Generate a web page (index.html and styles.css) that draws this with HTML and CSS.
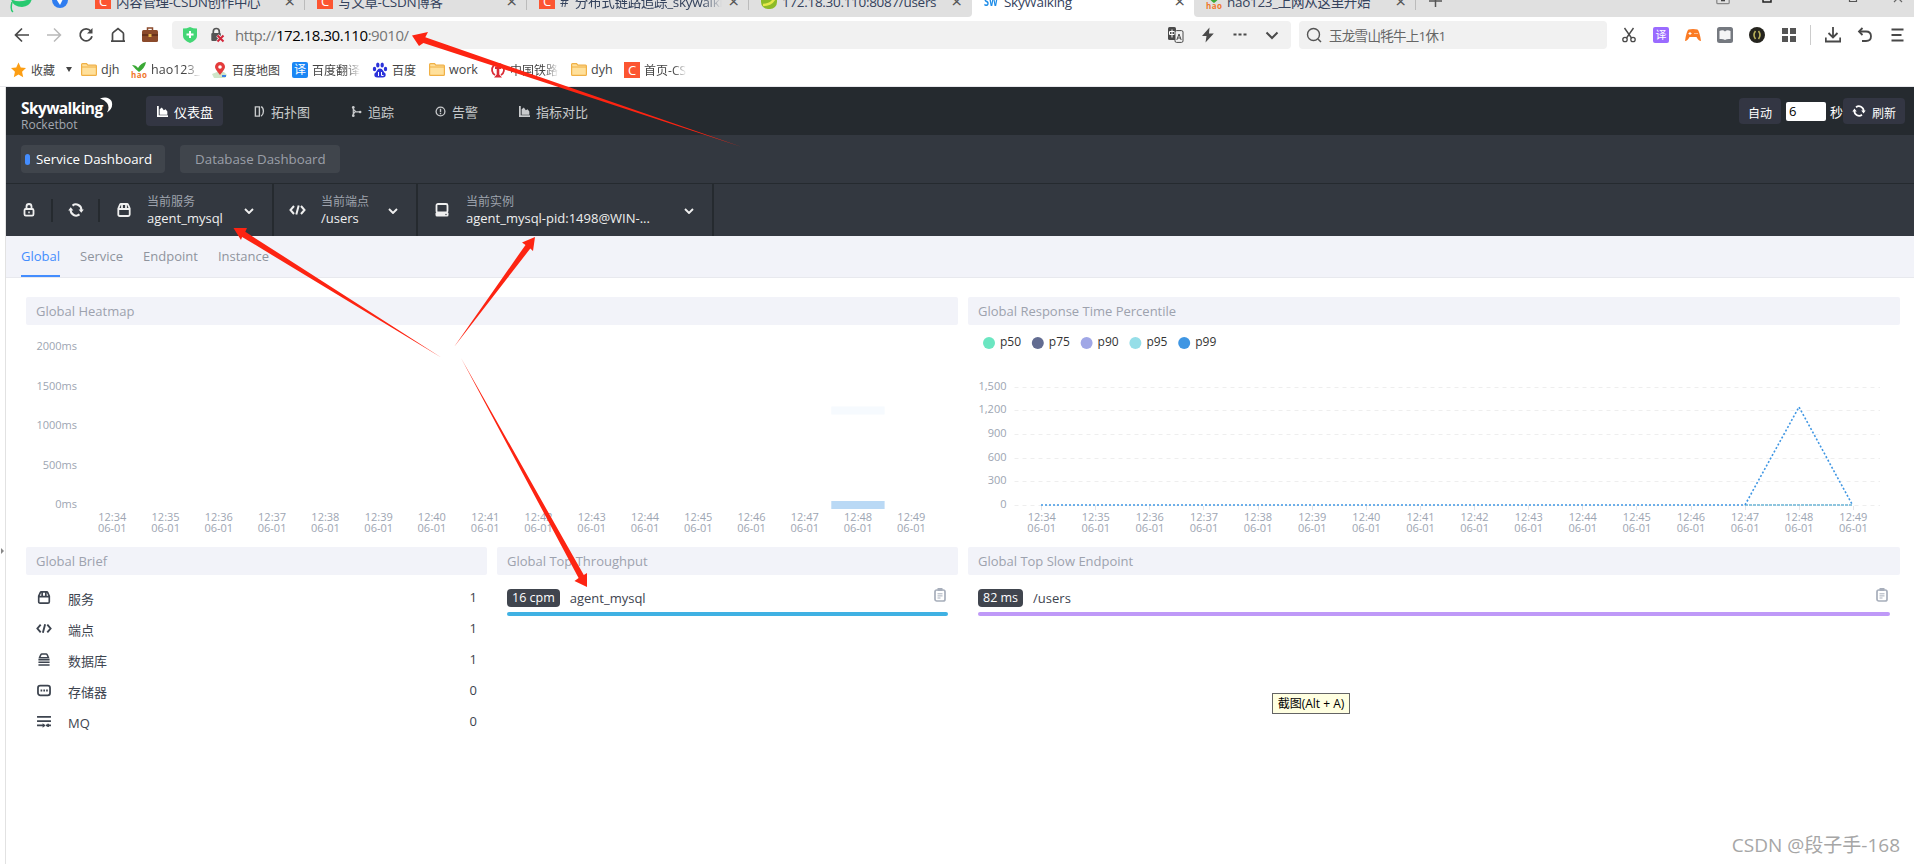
FILE: index.html
```html
<!DOCTYPE html>
<html lang="zh-CN">
<head>
<meta charset="UTF-8">
<meta name="viewport" content="width=device-width, initial-scale=1.0">
<title>SkyWalking</title>
<link rel="stylesheet" href="styles.css">
</head>
<body>

<svg class="sprite">
    <symbol id="i-chart" viewBox="0 0 10 10"><path d="M.8 0v9.2H10" fill="none" stroke="currentColor" stroke-width="1.6"/><path d="M2.4 8V3l2-1.6 1.8 2.4 1.6-.8L9.4 5v3z" fill="currentColor"/></symbol>
    <symbol id="i-topo" viewBox="0 0 11 12"><path d="M1 1h4.4v10H1zM5.4 1M7.3.8C10.600 2.500 10.600 9 7.300 11" fill="none" stroke="currentColor" stroke-width="1.5"/></symbol>
    <symbol id="i-trace" viewBox="0 0 11 12"><path d="M2 1v10M2 3.500l3 3h5M2 8.500l2-2" fill="none" stroke="currentColor" stroke-width="1.300"/><circle cx="2" cy="1.500" r="1.500" fill="currentColor"/><circle cx="2" cy="10.500" r="1.500" fill="currentColor"/><circle cx="9.500" cy="6.500" r="1.400" fill="currentColor"/></symbol>
    <symbol id="i-alarm" viewBox="0 0 12 12"><circle cx="6" cy="6" r="4.800" fill="none" stroke="currentColor" stroke-width="1.400"/><path d="M6 3v3.800M6 7.700v1.300" stroke="currentColor" stroke-width="1.500"/></symbol>
    <symbol id="i-reload" viewBox="0 0 16 14"><path d="M4.500 2.600A5.500 5.500 0 0 1 13.400 7M11.500 11.400A5.500 5.500 0 0 1 2.600 7" fill="none" stroke="currentColor" stroke-width="2"/><path d="M10.600 6.500h5.200l-2.500 3.300zM.2 7.500h5.200L2.700 4.200z" fill="currentColor"/></symbol>
    <symbol id="i-lock" viewBox="0 0 12 14"><path d="M3.500 6V3.500a2.500 2.500 0 0 1 5 0V6" fill="none" stroke="currentColor" stroke-width="1.800"/><rect x="1.500" y="6" width="9" height="6.600" rx="1.300" fill="none" stroke="currentColor" stroke-width="1.800"/><path d="M6 8.500v1.800" stroke="currentColor" stroke-width="1.500"/></symbol>
    <symbol id="i-service" viewBox="0 0 14 14"><path d="M1.300 5.500L3 1.700Q3.300 1 4 1h6q.7 0 1 .7l1.700 3.800v6q0 1.500-1.500 1.500H2.800q-1.500 0-1.500-1.500zM1.500 6h11M5 1v4.500M9 1v4.500" fill="none" stroke="currentColor" stroke-width="1.800"/></symbol>
    <symbol id="i-code" viewBox="0 0 17 12"><path d="M5 2L1.500 6 5 10M12 2l3.500 4L12 10M9.700 1.500L7.300 10.500" fill="none" stroke="currentColor" stroke-width="2"/></symbol>
    <symbol id="i-host" viewBox="0 0 14 14"><rect x="1.500" y="1" width="11" height="8.500" rx="1.500" fill="none" stroke="currentColor" stroke-width="1.800"/><rect x=".5" y="9" width="13" height="4.500" rx="1.500" fill="currentColor"/><circle cx="11" cy="11.500" r=".7" fill="#333840"/></symbol>
    <symbol id="i-down" viewBox="0 0 10 6"><path d="M1 1l4 4 4-4" fill="none" stroke="currentColor" stroke-width="1.900"/></symbol>
    <symbol id="i-db" viewBox="0 0 14 14"><path d="M2.200 5L3.500 2Q4 1.200 4.700 1.200h4.600q.7 0 1.200.8L11.800 5z" fill="none" stroke="currentColor" stroke-width="1.600"/><path d="M1 7.300h12M1 10h12M1 12.900h12" stroke="currentColor" stroke-width="1.800"/></symbol>
    <symbol id="i-cache" viewBox="0 0 15 14"><rect x="1" y="1.800" width="13" height="10.400" rx="2.500" fill="none" stroke="currentColor" stroke-width="1.900"/><path d="M3.800 7h7.800" stroke="currentColor" stroke-width="1.900" stroke-dasharray="1.800 1.200"/></symbol>
    <symbol id="i-mq" viewBox="0 0 15 14"><path d="M0 2h15M0 6.600h15M0 11.200h8M9.500 11.200H15" stroke="currentColor" stroke-width="1.800"/><path d="M6 8.800l3.200 2.400L6 13.600zM11 9.500h1.800v3.500H11z" fill="currentColor"/></symbol>
    <symbol id="i-clip" viewBox="0 0 12 14"><rect x="1" y="2" width="10" height="11" rx="1.800" fill="none" stroke="currentColor" stroke-width="1.700"/><path d="M3.500 0h5v3h-5z" fill="currentColor"/><path d="M3.500 5.800h5M3.500 7.900h5M3.500 10h3" stroke="currentColor" stroke-width="1"/></symbol>
    <symbol id="i-folder" viewBox="0 0 16 13"><path d="M.6 1.500q0-.9.900-.9h4l1.400 1.600h7.600q.9 0 .9.900v8.400q0 .9-.9.900h-13q-.9 0-.9-.9z" fill="#ffe09b" stroke="#f0b045" stroke-width="1.200"/><path d="M1 4h14" stroke="#f0b045"/></symbol>
    <symbol id="i-hao" viewBox="0 0 16 16"><path d="M1 3q4 0 6 3 3-5 8-6-1 6-7 10Q5 8 1 3z" fill="#3aa935"/><text x="0" y="15.500" font-size="8" font-weight="700" fill="#f0762b" textLength="16">hao</text></symbol>
</svg>

<!-- browser window -->
<div class="tabstrip">
    <div class="tabs-left">
        <svg class="logo-e" viewBox="0 0 24 16"><path d="M1 1q8 5 21-1Q21 8 12 9 3 9 1 1z" fill="#27c96f"/><path d="M2 4Q0 12 3 14" fill="none" stroke="#27c96f" stroke-width="1.500"/></svg>
        <svg class="logo-send" viewBox="0 0 16 16"><circle cx="8" cy="8" r="8" fill="#2f7df0"/><path d="M3.500 6L12 5 8 13z" fill="#fff"/></svg>
        <div class="tab"><i class="ico-c">C</i><span>内容管理-CSDN创作中心</span><b>×</b></div>
        <div class="tab"><i class="ico-c">C</i><span>写文章-CSDN博客</span><b>×</b></div>
        <div class="tab"><i class="ico-c">C</i><span class="fade">#&nbsp; 分布式链路追踪_skywalking</span><b>×</b></div>
        <div class="tab last"><svg class="ico" viewBox="0 0 16 16"><rect y="-4" width="16" height="20" rx="7" fill="#8dbb27"/><path d="M2 12Q12 12 15 2" fill="none" stroke="#e6e84a" stroke-width="2.500"/></svg><span>172.18.30.110:8087/users</span><b>×</b></div>
    </div>
    <div class="tab active"><i class="ico-sw">SW</i><span>SkyWalking</span><b>×</b></div>
    <div class="tabs-right">
        <div class="tab"><svg class="ico"><use href="#i-hao"/></svg><span>hao123_上网从这里开始</span><b>×</b></div>
        <svg class="plus" viewBox="0 0 13 16"><path d="M0 9h13M6.500 3v12" stroke="#555" stroke-width="1.500"/></svg>
        <svg class="winctl" viewBox="0 0 200 6"><path d="M.8 0v2.500q0 1.200 1.200 1.200h10q1.200 0 1.200-1.200V0" fill="none" stroke="#888" stroke-width="1.300"/><path d="M5 0h4v1.300H5z" fill="#444"/><path d="M47 0v2h8V0" fill="none" stroke="#222" stroke-width="1.500"/><path d="M133.500 0v1.500h7V0" fill="none" stroke="#555" stroke-width="1.200"/><path d="M178 2l3-3M186 2l-3-3" stroke="#666" stroke-width="1.200"/></svg>
    </div>
</div>

<div class="toolbar">
    <div class="nav-icons">
        <svg viewBox="0 0 16 16"><path d="M15 8H2M8 1.500L1.500 8 8 14.500" fill="none" stroke="#484848" stroke-width="1.700"/></svg>
        <svg viewBox="0 0 16 16"><path d="M1 8h13M8 1.500L14.500 8 8 14.500" fill="none" stroke="#b9b9b9" stroke-width="1.500"/></svg>
        <svg viewBox="0 0 16 16"><path d="M14 9.200A6 6 0 1 1 12.800 4" fill="none" stroke="#484848" stroke-width="1.800"/><path d="M14.500 1v5.500H9z" fill="#484848"/></svg>
        <svg viewBox="0 0 16 16"><path d="M1 14.200h14M2.500 14V7q0-1 .8-1.600L8 1.500l4.700 3.900q.8.600.8 1.600v7" fill="none" stroke="#484848" stroke-width="1.700"/></svg>
        <svg viewBox="0 0 16 16"><path d="M5.500 3V1h5v2" fill="none" stroke="#8b4a2b" stroke-width="1.500"/><rect y="3" width="16" height="12" rx="1.500" fill="#8b4a2b"/><path d="M0 8h16" stroke="#5d2d18" stroke-width="1.500"/><rect x="6.500" y="7" width="3" height="3" fill="#e8b64c"/></svg>
    </div>
    <div class="address">
        <svg class="shield" viewBox="0 0 14 16"><path d="M0 1.500Q4 1.500 7 0q3 1.500 7 1.500V9q0 4-7 7-7-3-7-7z" fill="#43d675"/><path d="M7 4v7M3.500 7.500h7" stroke="#fff" stroke-width="2"/></svg>
        <svg class="unsafe" viewBox="0 0 16 16"><path d="M3.300 7V4.500a3 3 0 0 1 6 0V7" fill="none" stroke="#555" stroke-width="1.700"/><rect x="1.300" y="6" width="9.500" height="8" rx="1" fill="#555"/><path d="M7.500 8.500l6 6M13.500 8.500l-6 6" stroke="#f1f1f1" stroke-width="3.500"/><path d="M7.500 8.500l6 6M13.500 8.500l-6 6" stroke="#d3263a" stroke-width="2"/></svg>
        <span class="url">http://<em>172.18.30.110</em>:9010/</span>
        <div class="addr-icons">
            <svg viewBox="0 0 16 16"><rect x=".5" width="8" height="13" rx="1.500" fill="#4a4a4a"/><path d="M2 4.500h5v3H2zM4.500 2.500v8" fill="none" stroke="#fff" stroke-width="1"/><rect x="7.500" y="3.600" width="8" height="11.800" rx="1.500" fill="#f1f1f1" stroke="#4a4a4a"/><path d="M9.300 13l2.200-6 2.200 6M10 11h3" fill="none" stroke="#4a4a4a"/></svg>
            <svg viewBox="0 0 16 16"><path d="M9.500.5L2 9h4.500L5.500 15.500 13.800 6.500H9z" fill="#4a4a4a"/></svg>
            <svg viewBox="0 0 16 16"><path d="M1.500 6.500h3v2h-3zM6.500 6.500h3v2h-3zM11.500 6.500h3v2h-3z" fill="#4a4a4a"/></svg>
            <svg viewBox="0 0 16 16"><path d="M2.500 5.500L8 11l5.500-5.500" fill="none" stroke="#4a4a4a" stroke-width="2"/></svg>
        </div>
    </div>
    <div class="search">
        <svg viewBox="0 0 16 16"><circle cx="7.500" cy="7.500" r="6" fill="none" stroke="#555" stroke-width="1.400"/><path d="M12 12l3 3" stroke="#555" stroke-width="1.500"/></svg>
        <span>玉龙雪山牦牛上1休1</span>
    </div>
    <div class="ext-icons">
        <svg viewBox="0 0 16 16"><path d="M3.500 1L10.500 11M12.500 1L5.500 11" stroke="#4a4a4a" stroke-width="1.400"/><circle cx="4" cy="12.500" r="2.200" fill="none" stroke="#4a4a4a" stroke-width="1.300"/><circle cx="12" cy="12.500" r="2.200" fill="none" stroke="#4a4a4a" stroke-width="1.300"/></svg>
        <i class="ico-yi">译</i>
        <svg viewBox="0 0 16 16"><path d="M3.500 2.500Q8 1.500 12.500 2.500 14.500 4 16 14q-2.500 0-4.500-4h-7Q2.500 14 0 14 1.500 4 3.500 2.500z" fill="#fb7b24"/><path d="M3.500 6.500h3M5 5v3M9.500 6.500h1M11.500 6.500h1" stroke="#fff"/></svg>
        <svg viewBox="0 0 16 16"><rect width="16" height="16" rx="2.500" fill="#757980"/><path d="M2.500 4Q6 2.500 8 4.500 10 2.500 13.500 4v8Q10 11.500 8 13 6 11.500 2.500 12z" fill="#f5f5f5"/></svg>
        <svg viewBox="0 0 16 16"><circle cx="8" cy="8" r="8" fill="#25241e"/><path d="M6.500 4Q3.500 8 6.500 12M9.500 4Q12.500 8 9.500 12" fill="none" stroke="#b9b05a" stroke-width="1.600"/></svg>
        <svg viewBox="0 0 16 16"><path d="M1 1h6v6H1zM9 1h6v6H9zM1 9h6v6H1zM9 9h6v6H9z" fill="#555"/></svg>
    </div>
    <div class="menu-icons">
        <svg viewBox="0 0 16 16"><path d="M8 0v10M3.500 6L8 10.500 12.500 6M.8 10.500v4h14.400v-4" fill="none" stroke="#484848" stroke-width="1.800"/></svg>
        <svg viewBox="0 0 16 16"><path d="M2.500 4.500H9q5 0 5 4.700T9 14H5" fill="none" stroke="#484848" stroke-width="1.800"/><path d="M5.500 1L2 4.500 5.500 8" fill="none" stroke="#484848" stroke-width="1.800"/></svg>
        <svg viewBox="0 0 16 16"><path d="M2.500 2.500h12M2.500 8h10M2.500 13.500h12" stroke="#484848" stroke-width="1.800"/></svg>
    </div>
</div>

<div class="bookmarks">
    <svg class="star" viewBox="0 0 16 16"><path d="M8 0l2.400 5.300 5.600.6-4.200 3.900 1.200 5.800L8 12.700 3 15.600l1.200-5.800L0 5.900l5.600-.6z" fill="#fc9e14"/></svg>
    <span class="fav">收藏</span><span class="caret"></span>
    <a class="bm bm-djh"><svg class="folder"><use href="#i-folder"/></svg>djh</a>
    <a class="bm bm-hao"><svg class="ico"><use href="#i-hao"/></svg><span class="fade">hao123_</span></a>
    <a class="bm bm-map"><svg class="ico" viewBox="0 0 16 16"><path d="M0 12l5-2h7l3 3-2 3H2z" fill="#cfe5c9"/><path d="M8 13Q3 7 3 5a5 5 0 0 1 10 0q0 2-5 8z" fill="#e43b3b"/><circle cx="8" cy="5" r="1.800" fill="#fff"/><path d="M10 13h4v2h-4z" fill="#3b82e4"/></svg>百度地图</a>
    <a class="bm bm-fy"><i class="ico-fy">译</i><span class="fade">百度翻译</span></a>
    <a class="bm bm-bd"><svg class="ico" viewBox="0 0 16 16"><g fill="#2b32d9"><ellipse cx="2.500" cy="7" rx="1.700" ry="2.300"/><ellipse cx="5.800" cy="3" rx="1.700" ry="2.500"/><ellipse cx="10.200" cy="3" rx="1.700" ry="2.500"/><ellipse cx="13.500" cy="7" rx="1.700" ry="2.300"/><path d="M8 6.500q2 0 3 2t2.500 3q1 4-3 4H5.500q-4 0-3-4Q4 10.500 5 8.500t3-2z"/></g><path d="M6.500 10v4M9.500 10v3.500h2" stroke="#fff" fill="none"/></svg>百度</a>
    <a class="bm bm-work"><svg class="folder"><use href="#i-folder"/></svg>work</a>
    <a class="bm bm-rail"><svg class="ico" viewBox="0 0 16 16"><path d="M5 13A6 6 0 1 1 11 13" fill="none" stroke="#da2a35" stroke-width="1.800"/><path d="M5 4.500h6v2.500H9.300v5.500L12 15.500H4l2.700-3V7H5z" fill="#da2a35"/></svg><span class="fade">中国铁路</span></a>
    <a class="bm bm-dyh"><svg class="folder"><use href="#i-folder"/></svg>dyh</a>
    <a class="bm bm-csdn"><i class="ico-c">C</i><span class="fade">首页-CS</span></a>
</div>

<!-- skywalking page -->
<div class="page">
    <div class="side-handle"></div>
    <div class="app">
        <div class="header">
            <div class="brand">
                <div class="brand-name">Skywalking<svg class="moon" viewBox="0 0 14 16"><path d="M1 1.500Q9-1.500 12.500 4 15 11 8 15.500 11 10 8 6 5.500 2.500 1 1.500z" fill="#fff"/></svg></div>
                <div class="brand-sub">Rocketbot</div>
            </div>
            <div class="nav">
                <a class="active"><svg><use href="#i-chart"/></svg>仪表盘</a>
                <a><svg><use href="#i-topo"/></svg>拓扑图</a>
                <a><svg><use href="#i-trace"/></svg>追踪</a>
                <a><svg><use href="#i-alarm"/></svg>告警</a>
                <a><svg><use href="#i-chart"/></svg>指标对比</a>
            </div>
            <div class="auto">
                <button class="btn">自动</button>
                <input class="seconds" type="text" value="6">
                <span>秒</span>
                <button class="btn"><svg><use href="#i-reload"/></svg>刷新</button>
            </div>
        </div>

        <div class="boards">
            <a class="board active">Service Dashboard</a>
            <a class="board">Database Dashboard</a>
        </div>

        <div class="selectors">
            <div class="tool"><svg class="i-lock"><use href="#i-lock"/></svg></div>
            <div class="tool"><svg class="i-reload"><use href="#i-reload"/></svg></div>
            <div class="select sel-service"><svg class="sel-icon"><use href="#i-service"/></svg><div class="sel-text"><small>当前服务</small><p>agent_mysql</p></div><svg class="down"><use href="#i-down"/></svg></div>
            <div class="select sel-endpoint"><svg class="sel-icon"><use href="#i-code"/></svg><div class="sel-text"><small>当前端点</small><p>/users</p></div><svg class="down"><use href="#i-down"/></svg></div>
            <div class="select sel-instance"><svg class="sel-icon"><use href="#i-host"/></svg><div class="sel-text"><small>当前实例</small><p>agent_mysql-pid:1498@WIN-...</p></div><svg class="down"><use href="#i-down"/></svg></div>
        </div>

        <div class="subtabs">
            <a class="active">Global</a>
            <a>Service</a>
            <a>Endpoint</a>
            <a>Instance</a>
        </div>

        <div class="grid">
            <div class="card wide">
                <h3>Global Heatmap</h3>
                <svg class="chart" id="heatmap" viewBox="0 0 932 222"></svg>
            </div>
            <div class="card wide">
                <h3>Global Response Time Percentile</h3>
                <svg class="chart" id="percentile" viewBox="0 0 932 222"></svg>
            </div>
            <div class="card">
                <h3>Global Brief</h3>
                <ul class="brief">
                    <li><svg><use href="#i-service"/></svg><span>服务</span><b>1</b></li>
                    <li><svg><use href="#i-code"/></svg><span>端点</span><b>1</b></li>
                    <li><svg><use href="#i-db"/></svg><span>数据库</span><b>1</b></li>
                    <li><svg><use href="#i-cache"/></svg><span>存储器</span><b>0</b></li>
                    <li><svg><use href="#i-mq"/></svg><span>MQ</span><b>0</b></li>
                </ul>
            </div>
            <div class="card">
                <h3>Global Top Throughput</h3>
                <div class="top">
                    <div class="top-row"><span class="badge">16 cpm</span><span class="cpm-name">agent_mysql</span><svg><use href="#i-clip"/></svg></div>
                    <div class="bar blue"></div>
                </div>
            </div>
            <div class="card wide">
                <h3>Global Top Slow Endpoint</h3>
                <div class="top">
                    <div class="top-row"><span class="badge">82 ms</span><span>/users</span><svg><use href="#i-clip"/></svg></div>
                    <div class="bar purple"></div>
                </div>
            </div>
        </div>
    </div>
</div>

<!-- annotations -->
<svg class="arrows" viewBox="0 0 1914 864">
    <path d="M412 35.500L428 32 425.300 37.300 742 147 423.400 43 419 46z"/>
    <path d="M233.500 228H247L245.300 231.800 442 358 242.100 236.900 241 240z"/>
    <path d="M535 237L533 251 530.300 248.500 454 347 525.500 244.900 522 242.500z"/>
    <path d="M587 587L587 573 583.800 575.100 461 358 578.600 577.900 574.500 581z"/>
</svg>
<div class="tip">截图(Alt + A)</div>
<div class="watermark">CSDN @段子手-168</div>

<script>
    var times = [];
    for (var m = 34; m < 50; m++) {
        times.push('12:' + m);
    }

    function text(x, y, anchor, cls, str) {
        return '<text class="' + cls + '" x="' + x + '" y="' + y + '" text-anchor="' + anchor + '">' + str + '</text>';
    }

    function xAxis(start, step) {
        var out = '';
        for (var i = 0; i < times.length; i++) {
            var x = (start + step * i).toFixed(1);
            out += text(x, 196, 'middle', 'axis', times[i]);
            out += text(x, 207, 'middle', 'axis', '06-01');
        }
        return out;
    }

    // heatmap
    var heat = xAxis(86.300, 53.270);
    var levels = ['2000ms', '1500ms', '1000ms', '500ms', '0ms'];
    for (var i = 0; i < levels.length; i++) {
        heat += text(51, 25 + i * 39.500, 'end', 'axis', levels[i]);
    }
    heat += '<rect x="805.300" y="81.500" width="53.300" height="8" fill="#f6fafe"/>';
    heat += '<rect x="805.300" y="176" width="53.300" height="8" fill="#bad9f5"/>';
    document.getElementById('heatmap').innerHTML = heat;

    // percentile
    var line = '';
    var legend = [['p50', '#6be6c1'], ['p75', '#626c91'], ['p90', '#a0a7e6'], ['p95', '#96dee8'], ['p99', '#3f96e3']];
    for (i = 0; i < legend.length; i++) {
        var cx = 21 + i * 48.800;
        line += '<circle cx="' + cx + '" cy="18" r="6" fill="' + legend[i][1] + '"/>';
        line += text(cx + 11, 21, 'start', 'legend', legend[i][0]);
    }
    var ticks = ['1,500', '1,200', '900', '600', '300', '0'];
    var ys = [62.500, 85.500, 109.500, 133.500, 156.500, 180.500];
    for (i = 0; i < ticks.length; i++) {
        line += text(38.500, ys[i] + 2.500, 'end', 'axis', ticks[i]);
        line += '<path class="split" d="M46.500 ' + ys[i] + 'H912"/>';
    }
    for (i = 0; i < times.length; i++) {
        line += '<path class="tick" d="M' + (Math.round(73 + 54.130 * i) + 0.500) + ' 181v4"/>';
    }
    line += xAxis(73.700, 54.110);
    line += '<path class="p95" d="M777 180H884"/>';
    line += '<path class="p99" d="M73 180H777L831 82 884.500 180"/>';
    document.getElementById('percentile').innerHTML = line;
</script>

</body>
</html>
```
FILE: styles.css
```css
* {
    box-sizing: border-box;
}

body {
    margin: 0;
    width: 1914px;
    height: 864px;
    overflow: hidden;
    position: relative;
    background-color: #fff;
    font-family: "Open Sans", "Noto Sans CJK SC", sans-serif;
    font-size: 12px;
    color: #333;
}

svg {
    display: block;
    flex: none;
}

i, em {
    font-style: normal;
}

.sprite {
    position: absolute;
    width: 0;
    height: 0;
}

/* tab strip */
.tabstrip {
    display: flex;
    height: 17px;
    overflow: hidden;
}
.tabs-left, .tabs-right {
    display: flex;
    background-color: #e0e0e0;
}
.tabs-left {
    width: 972px;
    border-bottom-right-radius: 4px;
}
.tabs-right {
    flex: 1;
    border-bottom-left-radius: 4px;
}
.logo-e {
    width: 24px;
    height: 16px;
    margin-left: 10px;
    margin-top: -2px;
}
.logo-send {
    width: 16px;
    height: 16px;
    margin: -8px 15px 0 18px;
}
.tab {
    width: 222px;
    height: 10px;
    padding: 0 9px 0 12px;
    border-right: 1px solid #bbb;
    display: flex;
    align-items: flex-start;
    color: #34425c;
    font-size: 13.5px;
    line-height: 16px;
    white-space: nowrap;
}
.tab.last, .tab.active {
    border-right: none;
}
.tab.active {
    height: 17px;
}
.tab > * {
    margin-top: -7px;
}
.tab span {
    margin-left: 5px;
    margin-top: -6px;
    width: 166px;
    overflow: hidden;
    letter-spacing: -0.3px;
}
.tab b {
    margin-left: 6px;
    font-size: 19px;
    font-weight: 400;
    color: #555;
}
.ico {
    width: 16px;
    height: 16px;
}
.ico-c, .ico-fy, .ico-yi {
    flex: none;
    width: 16px;
    height: 16px;
    background-color: #fc5531;
    color: #fff;
    font-size: 13px;
    line-height: 16px;
    text-align: center;
}
.ico-fy {
    background-color: #1b87f5;
    border-radius: 2px;
    font-size: 12px;
}
.ico-yi {
    background-color: #9a6bff;
    border-radius: 2px;
    font-size: 11px;
}
.ico-sw {
    width: 15px;
    font-size: 13px;
    font-weight: 700;
    color: #1d8ce8;
    transform: scaleX(0.7);
    transform-origin: left;
}
.fade {
    -webkit-mask-image: linear-gradient(to right, #000 70%, transparent 102%);
    mask-image: linear-gradient(to right, #000 70%, transparent 102%);
}
.tab .fade {
    -webkit-mask-image: linear-gradient(to right, #000 88%, transparent);
    mask-image: linear-gradient(to right, #000 88%, transparent);
}
.plus {
    width: 13px;
    height: 16px;
    margin: -8px 0 0 13px;
}
.winctl {
    width: 200px;
    height: 6px;
    margin-left: auto;
    margin-right: -2px;
}

/* address bar */
.toolbar {
    display: flex;
    align-items: center;
    height: 36px;
}
.nav-icons {
    display: flex;
    gap: 16px;
    padding-left: 14px;
    width: 172px;
}
.toolbar svg {
    width: 16px;
    height: 16px;
}
.address {
    width: 1119px;
    height: 28px;
    padding: 0 11px;
    display: flex;
    align-items: center;
    border-radius: 4px;
    background-color: #f1f1f1;
}
.toolbar .shield {
    width: 14px;
}
.unsafe {
    margin-left: 13px;
}
.url {
    margin-left: 9px;
    font-size: 15px;
    letter-spacing: -0.45px;
    color: #757575;
}
.url em {
    color: #000;
}
.addr-icons, .ext-icons {
    display: flex;
    gap: 16px;
}
.addr-icons {
    margin-left: auto;
}
.toolbar .addr-icons svg:nth-child(1) {
    width: 17px;
}
.search {
    width: 308px;
    height: 28px;
    margin-left: 8px;
    padding-left: 7px;
    display: flex;
    align-items: center;
    border-radius: 4px;
    background-color: #f1f1f1;
    font-size: 13.5px;
    color: #666;
}
.search span {
    margin-left: 7px;
    letter-spacing: -0.7px;
}
.ext-icons {
    margin-left: 14px;
}
.menu-icons {
    display: flex;
    gap: 16px;
    margin-left: 13px;
    padding-left: 14px;
    height: 20px;
    align-items: center;
    border-left: 1px solid #ccc;
}

/* bookmarks */
.bookmarks {
    display: flex;
    align-items: center;
    height: 33px;
    color: #444;
    white-space: nowrap;
}
.star {
    width: 15px;
    height: 16px;
    margin-left: 11px;
}
.fav {
    margin-left: 5px;
}
.caret {
    margin: 0 9px 0 11px;
    border: 3px solid transparent;
    border-top: 5px solid #444;
    border-bottom: none;
}
.bm {
    display: flex;
    align-items: center;
    gap: 4px;
    font-size: 12.5px;
}
.bm .folder {
    width: 16px;
    height: 13px;
}
.bm-djh { width: 50px; }
.bm-hao { width: 81px; }
.bm-map, .bm-fy { width: 80px; font-size: 12px; }
.bm-bd { width: 57px; font-size: 12px; }
.bm-work { width: 61px; }
.bm-rail { width: 81px; font-size: 12px; }
.bm-dyh { width: 53px; }
.bm-csdn { font-size: 12px; }

/* page frame */
.page {
    display: flex;
    height: 778px;
    border-top: 1px solid #e8e8ec;
}
.side-handle {
    width: 6px;
    border-right: 1px solid #e2e2e2;
    display: flex;
    align-items: center;
}
.side-handle::before {
    content: "";
    margin: 150px 0 0 1px;
    border: 3px solid transparent;
    border-left: 3px solid #888;
    border-right: none;
}
.app {
    flex: 1;
}

.header {
    display: flex;
    height: 48px;
    background-color: #252a2f;
    color: #fff;
}
.brand {
    width: 140px;
    padding: 11px 0 0 15px;
}
.brand-name {
    display: flex;
    height: 18px;
    font-family: "Open Sans", sans-serif;
    font-size: 15.5px;
    font-weight: 700;
    line-height: 20px;
    letter-spacing: -0.6px;
}
.moon {
    width: 14px;
    height: 16px;
    margin-left: -4px;
    margin-top: -1px;
}
.brand-sub {
    margin-top: 1px;
    line-height: 15px;
    font-size: 12px;
    color: #a3a8b0;
}
.nav {
    display: flex;
    gap: 20px;
    padding-top: 9px;
}
.nav a {
    display: flex;
    align-items: center;
    height: 30px;
    padding: 0 10px 0 11px;
    border-radius: 4px;
    font-size: 13px;
    color: #c8cacc;
}
.nav a.active {
    background-color: #333643;
    color: #fff;
}
.nav svg {
    width: 11px;
    height: 11px;
    margin-right: 6px;
}
.auto {
    display: flex;
    align-items: center;
    margin-left: auto;
    padding-right: 9px;
    font-size: 13px;
}
.btn {
    display: flex;
    align-items: center;
    height: 26px;
    padding: 3px 9px 0;
    border: none;
    border-radius: 4px;
    background-color: #333643;
    color: #fff;
    font-family: inherit;
    font-size: 12px;
}
.btn svg {
    width: 14px;
    height: 12px;
    margin: -3px 6px 0 0;
}
.seconds {
    width: 40px;
    height: 19px;
    margin: 0 4px 0 5px;
    padding: 0 3px;
    border: none;
    border-radius: 2px;
    font-family: inherit;
    font-size: 13px;
}

.boards {
    display: flex;
    gap: 15px;
    height: 49px;
    padding: 10px 15px;
    background-color: #333840;
    border-bottom: 1px solid #252a2f;
}
.board {
    height: 28px;
    padding: 0 14px 0 15px;
    line-height: 28px;
    border-radius: 4px;
    background-color: #40454c;
    color: #9b9fa8;
    font-size: 13.3px;
}
.board.active {
    display: flex;
    align-items: center;
    padding: 0 13px 0 4px;
    color: #fff;
}
.board.active::before {
    content: "";
    width: 5px;
    height: 11px;
    margin-right: 6px;
    border-radius: 3px;
    background-color: #448dfe;
}

.selectors {
    display: flex;
    align-items: center;
    height: 52px;
    background-color: #333840;
    color: #efefef;
}
.tool {
    width: 47px;
    height: 23px;
    display: flex;
    align-items: center;
    justify-content: center;
    border-right: 2px solid #252a2f;
}
.i-lock {
    width: 12px;
    height: 14px;
}
.i-reload {
    width: 16px;
    height: 14px;
}
.select {
    display: flex;
    align-items: center;
    height: 52px;
    padding-right: 18px;
    border-right: 2px solid #252a2f;
}
.sel-service { width: 174px; padding-left: 17px; }
.sel-endpoint { width: 144px; padding-left: 15px; }
.sel-instance { width: 296px; padding-left: 17px; }
.sel-icon {
    width: 14px;
    height: 14px;
}
.sel-endpoint .sel-icon {
    width: 17px;
}
.sel-text {
    margin-left: 16px;
    white-space: nowrap;
}
.sel-endpoint .sel-text {
    margin-left: 15px;
}
.sel-instance .sel-text {
    margin-left: 17px;
}
.sel-text small {
    display: block;
    line-height: 16px;
    font-size: 12px;
    color: #9ea3ad;
}
.sel-text p {
    margin: 0;
    line-height: 16px;
    font-size: 13px;
}
.down {
    width: 10px;
    height: 6px;
    margin-left: auto;
    margin-top: 2px;
}

.subtabs {
    display: flex;
    gap: 20px;
    height: 42px;
    padding-left: 15px;
    border-bottom: 1px solid #e8e9ee;
    background-color: #f2f3f9;
}
.subtabs a {
    height: 41px;
    line-height: 40px;
    font-size: 13px;
    color: #8f939d;
}
.subtabs a.active {
    color: #448dfe;
    border-bottom: 2px solid #448dfe;
}

/* cards */
.grid {
    display: grid;
    grid-template-columns: repeat(4, 461px);
    column-gap: 10px;
    padding: 19px 14px 0 20px;
}
.wide {
    grid-column: span 2;
}
.card h3 {
    margin: 0;
    height: 28px;
    padding-left: 10px;
    line-height: 28px;
    border-radius: 2px;
    background-color: #f2f3f9;
    color: #9da2ae;
    font-size: 13px;
    font-weight: 400;
}
.chart {
    width: 932px;
    height: 222px;
}
.axis {
    font-size: 11px;
    fill: #9da5b2;
}
.legend {
    font-size: 12px;
    fill: #333;
}
.split {
    stroke: #eee;
    stroke-dasharray: 4 4;
}
.tick {
    stroke: #e5e5e8;
}
.p95, .p99 {
    fill: none;
    stroke: #8ec5de;
    stroke-width: 2;
    stroke-dasharray: 3 1;
}
.p99 {
    stroke: #3f96e3;
    stroke-width: 1.6;
    stroke-dasharray: 2 2;
}

.brief {
    list-style: none;
    margin: 0;
    padding: 8px 10px 0;
}
.brief li {
    display: flex;
    align-items: center;
    height: 31px;
    font-size: 13px;
    color: #3d444f;
}
.brief svg {
    width: 16px;
    height: 13px;
    margin-right: 16px;
    margin-top: -3px;
}
.brief b {
    margin-left: auto;
    margin-top: -4px;
    font-weight: 400;
}

.top {
    padding: 14px 10px 0;
}
.top-row {
    display: flex;
    align-items: center;
    height: 18px;
    font-size: 13px;
    color: #3d444f;
}
.badge {
    height: 18px;
    padding: 0 5px;
    margin-right: 10px;
    line-height: 18px;
    border-radius: 4px;
    background-color: #40454e;
    color: #fff;
    font-size: 12.5px;
}
.top-row svg {
    width: 12px;
    height: 14px;
    margin: -6px 2px 0 auto;
    color: #a7aebb;
}
.bar {
    height: 4px;
    margin-top: 5px;
    border-radius: 2px;
}
.blue {
    background-color: #3fb1e3;
}
.purple {
    background-color: #bf99f8;
}

/* things lying over the page */
.arrows {
    position: absolute;
    left: 0;
    top: 0;
    width: 1914px;
    height: 864px;
    fill: #fd2412;
}
.tip {
    position: absolute;
    left: 1272px;
    top: 693px;
    width: 78px;
    height: 21px;
    border: 1px solid #646464;
    background-color: #ffffe1;
    color: #000;
    font-size: 12px;
    line-height: 19px;
    text-align: center;
    white-space: nowrap;
}
.watermark {
    position: absolute;
    right: 14px;
    bottom: 5px;
    font-size: 19px;
    line-height: 28px;
    color: #a6a6a6;
    white-space: nowrap;
}
```
